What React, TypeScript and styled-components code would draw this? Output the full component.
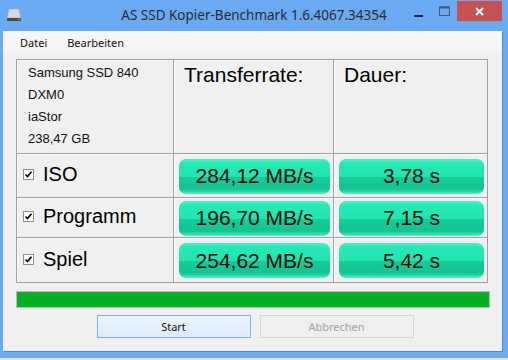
import React from "react"
import styled, { createGlobalStyle } from "styled-components"

const GlobalStyle = createGlobalStyle`
  html, body {
    margin: 0;
    padding: 0;
    background: #dfe3e8;
  }
`

const Window = styled.div`
  width: 508px;
  height: 358px;
  background: #6aaaf2;
  display: flex;
  flex-direction: column;
  font-family: "Liberation Sans", Arial, sans-serif;
`

const TitleBar = styled.div`
  height: 31px;
  display: grid;
  grid-template-columns: 1fr auto 1fr;
  align-items: start;
`

const TitleIcon = styled.div`
  padding: 8px 0 0 6px;
  height: 14px;
`

const Title = styled.div`
  font-family: "Noto Sans", "Liberation Sans", sans-serif;
  font-size: 13.5px;
  color: #2c2c2c;
  line-height: 31px;
  white-space: nowrap;
`

const Controls = styled.div`
  display: flex;
  justify-content: flex-end;
  align-items: flex-start;
  padding-right: 6px;
`

const ControlButton = styled.div<{ $w: number }>`
  width: ${(p) => p.$w}px;
  height: 20px;
  margin-top: 1px;
  display: flex;
  align-items: center;
  justify-content: center;
`

const CloseButton = styled(ControlButton)`
  background: #c75050;
`

const Client = styled.div`
  margin: 0 6px 0 3px;
  height: 320px;
  background: #f0f0f0;
  box-shadow: 1px 1px 0 #4f88cc;
  display: flex;
  flex-direction: column;
`

const MenuBar = styled.div`
  height: 22px;
  display: flex;
  align-items: center;
  padding-left: 7px;
  background: linear-gradient(#f8f8f8, #f3f3f3);
`

const MenuItem = styled.span`
  font-family: "Noto Sans", "Liberation Sans", sans-serif;
  font-size: 11px;
  color: #111;
  padding: 0 10px;
  margin-top: 1px;
`

const Content = styled.div`
  padding: 6px 12px 0 13px;
  display: flex;
  flex-direction: column;
`

const Table = styled.div`
  width: 472px;
  height: 224px;
  box-sizing: border-box;
  border: 1px solid #a0a0a0;
  background: #a0a0a0;
  display: grid;
  grid-template-columns: 156px 159px 1fr;
  grid-template-rows: 93px 43px 39px 1fr;
  gap: 1px;
`

const Cell = styled.div`
  background: #f0f0f0;
  border-top: 1px solid #fcfcfc;
  border-left: 1px solid #fcfcfc;
  box-sizing: border-box;
  min-width: 0;
`

const DriveCell = styled(Cell)`
  padding: 1px 0 0 10px;
  font-size: 13px;
  line-height: 22px;
  color: #111;
`

const HeaderCell = styled(Cell)`
  padding: 2px 0 0 9px;
  font-size: 21px;
  line-height: 24px;
  color: #000;
`

const LabelCell = styled(Cell)`
  display: flex;
  align-items: center;
  padding: 0 0 3px 5px;
  gap: 9px;
  font-size: 20px;
  color: #000;
`

const ValueCell = styled(Cell)`
  display: flex;
  align-items: center;
  padding: 0 3px 0 4px;
`

const Box = styled.span`
  width: 11px;
  height: 11px;
  box-sizing: border-box;
  border: 1px solid #8e8e8e;
  background: #fff;
  display: flex;
  align-items: center;
  justify-content: center;
`

const Pill = styled.div`
  flex: 1;
  height: 35px;
  border-radius: 7px;
  display: flex;
  align-items: center;
  justify-content: center;
  font-size: 21px;
  color: #0a0a0a;
  background: linear-gradient(
    to bottom,
    #48f2c8 0%,
    #27e9b6 12%,
    #22e4b0 50%,
    #15cb97 52%,
    #12c591 86%,
    #30dcaa 94%,
    #5cecc6 100%
  );
`

const Progress = styled.div`
  margin-top: 8px;
  height: 17px;
  box-sizing: border-box;
  border: 1px solid #bcbcbc;
  background: #06b025;
`

const Buttons = styled.div`
  margin-top: 7px;
  display: flex;
  justify-content: center;
  gap: 9px;
  padding-left: 4px;
`

const Button = styled.div<{ $disabled?: boolean }>`
  width: 154px;
  height: 23px;
  box-sizing: border-box;
  display: flex;
  align-items: center;
  justify-content: center;
  font-family: "Noto Sans", "Liberation Sans", sans-serif;
  font-size: 11px;
  color: ${(p) => (p.$disabled ? "#a3a3a3" : "#111")};
  border: 1px solid ${(p) => (p.$disabled ? "#d5d5d5" : "#7eb4ea")};
  background: ${(p) =>
    p.$disabled ? "#efefef" : "linear-gradient(#ecf4fc, #dcecfc)"};
`

const DriveIcon = () => (
  <svg width="16" height="14" viewBox="0 0 16 14">
    <path d="M3 1 H13 L15 10 H1 Z" fill="#c9c9c9" />
    <path d="M4 2 H12 L13.5 9 H2.5 Z" fill="#dadada" />
    <rect x="1" y="10" width="14" height="3" fill="#4a4a4a" />
    <rect x="12" y="11" width="2" height="1" fill="#5aa0ff" />
  </svg>
)

const Check = () => (
  <svg width="9" height="9" viewBox="0 0 9 9">
    <path d="M1.5 4.5 L3.5 6.5 L7.5 1.8" stroke="#000" strokeWidth="1.6" fill="none" />
  </svg>
)

const rows = [
  { name: "ISO", rate: "284,12 MB/s", time: "3,78 s" },
  { name: "Programm", rate: "196,70 MB/s", time: "7,15 s" },
  { name: "Spiel", rate: "254,62 MB/s", time: "5,42 s" },
]

const App = () => {
  return (
    <Window>
      <GlobalStyle />
      <TitleBar>
        <TitleIcon>
          <DriveIcon />
        </TitleIcon>
        <Title>AS SSD Kopier-Benchmark 1.6.4067.34354</Title>
        <Controls>
          <ControlButton $w={26}>
            <svg width="9" height="12" viewBox="0 0 9 12">
              <rect x="0" y="10" width="9" height="2" fill="#2b2b2b" />
            </svg>
          </ControlButton>
          <ControlButton $w={26}>
            <svg width="11" height="10" viewBox="0 0 11 10">
              <rect x="0.5" y="1" width="10" height="8.5" fill="none" stroke="#3d5a80" strokeWidth="1" />
              <rect x="0" y="0.5" width="11" height="2" fill="#3d5a80" />
            </svg>
          </ControlButton>
          <CloseButton $w={45}>
            <svg width="9" height="9" viewBox="0 0 9 9">
              <path d="M1 1 L8 8 M8 1 L1 8" stroke="#fff" strokeWidth="2" />
            </svg>
          </CloseButton>
        </Controls>
      </TitleBar>
      <Client>
        <MenuBar>
          <MenuItem>Datei</MenuItem>
          <MenuItem>Bearbeiten</MenuItem>
        </MenuBar>
        <Content>
          <Table>
            <DriveCell>
              Samsung SSD 840
              <br />
              DXM0
              <br />
              iaStor
              <br />
              238,47 GB
            </DriveCell>
            <HeaderCell>Transferrate:</HeaderCell>
            <HeaderCell>Dauer:</HeaderCell>
            {rows.map((r) => (
              <React.Fragment key={r.name}>
                <LabelCell>
                  <Box>
                    <Check />
                  </Box>
                  {r.name}
                </LabelCell>
                <ValueCell>
                  <Pill>{r.rate}</Pill>
                </ValueCell>
                <ValueCell>
                  <Pill>{r.time}</Pill>
                </ValueCell>
              </React.Fragment>
            ))}
          </Table>
          <Progress />
          <Buttons>
            <Button>Start</Button>
            <Button $disabled>Abbrechen</Button>
          </Buttons>
        </Content>
      </Client>
    </Window>
  )
}

export default App
